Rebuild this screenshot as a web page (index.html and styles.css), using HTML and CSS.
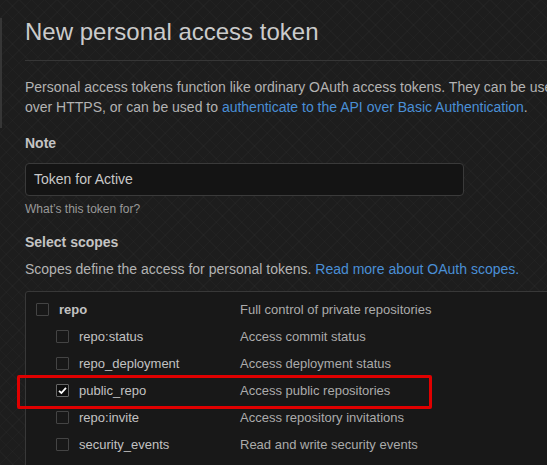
FILE: index.html
```html
<!DOCTYPE html>
<html>
<head>
<meta charset="utf-8">
<link rel="stylesheet" href="styles.css">
</head>
<body>
<div class="page">
  <aside class="side"></aside>
  <main class="main">
    <h1 class="title">New personal access token</h1>
    <p class="intro">Personal access tokens function like ordinary OAuth access tokens. They can be used to access the API<br>over HTTPS, or can be used to <a class="link" href="#">authenticate to the API over Basic Authentication</a>.</p>
    <div class="field">
      <label class="label">Note</label>
      <div class="input">Token for Active</div>
      <div class="hint">What’s this token for?</div>
    </div>
    <div class="label scopes-title">Select scopes</div>
    <p class="scopes-desc">Scopes define the access for personal tokens. <a class="link" href="#">Read more about OAuth scopes.</a></p>
    <div class="scopes">
      <div class="row">
        <div class="name"><span class="cb"></span><span class="strong">repo</span></div>
        <div class="desc">Full control of private repositories</div>
      </div>
      <div class="row sub">
        <div class="name"><span class="cb"></span><span>repo:status</span></div>
        <div class="desc">Access commit status</div>
      </div>
      <div class="row sub">
        <div class="name"><span class="cb"></span><span>repo_deployment</span></div>
        <div class="desc">Access deployment status</div>
      </div>
      <div class="row sub hl">
        <div class="name"><span class="cb checked"><svg viewBox="0 0 13 13" width="13" height="13"><path d="M3 6.8 L5.4 9 L10 3.8" fill="none" stroke="#fff" stroke-width="1.8"/></svg></span><span>public_repo</span></div>
        <div class="desc">Access public repositories</div>
        <div class="redbox"></div>
      </div>
      <div class="row sub">
        <div class="name"><span class="cb"></span><span>repo:invite</span></div>
        <div class="desc">Access repository invitations</div>
      </div>
      <div class="row sub">
        <div class="name"><span class="cb"></span><span>security_events</span></div>
        <div class="desc">Read and write security events</div>
      </div>
    </div>
  </main>
</div>
</body>
</html>
```

FILE: styles.css
```css
html, body {
  margin: 0;
  padding: 0;
  overflow: hidden;
}
body {
  width: 547px;
  height: 465px;
  background-color: #1d1d1d;
  background-image:
    repeating-linear-gradient(45deg, rgba(255,255,255,0.018) 0 1px, transparent 1px 9px),
    repeating-linear-gradient(-45deg, rgba(255,255,255,0.018) 0 1px, transparent 1px 9px);
  font-family: "Liberation Sans", Arial, sans-serif;
  color: #b3b3b3;
  font-size: 14px;
}
.page {
  display: flex;
  align-items: flex-start;
}
.side {
  flex: none;
  width: 2px;
  height: 110px;
  margin-top: 18px;
  background: #363636;
}
.main {
  flex: none;
  width: 720px;
  padding-left: 23px;
}
.title {
  margin: 16px 0 0;
  font-size: 24px;
  font-weight: normal;
  line-height: 32px;
  color: #cbcbcb;
  padding-bottom: 12px;
  border-bottom: 1px solid #363636;
}
.intro {
  margin: 16px 0 0;
  line-height: 20px;
}
.link {
  color: #4a8fd6;
  text-decoration: none;
}
.field {
  margin-top: 16px;
}
.label {
  display: block;
  font-weight: bold;
  color: #c4c4c4;
  line-height: 20px;
}
.input {
  margin-top: 10px;
  box-sizing: border-box;
  width: 439px;
  height: 33px;
  border: 1px solid #3a3a3a;
  border-radius: 4px;
  background: #141414;
  color: #c8c8c8;
  padding: 0 8px;
  line-height: 31px;
  font-size: 14px;
}
.hint {
  margin-top: 5px;
  font-size: 12px;
  color: #999;
  line-height: 16px;
}
.scopes-title {
  margin-top: 15px;
}
.scopes-desc {
  margin: 7px 0 0;
  line-height: 20px;
}
.scopes {
  margin-top: 12px;
  border: 1px solid #383838;
  border-radius: 3px;
  background: #181818;
  padding: 4px 10px 4px 10px;
  height: 170px;
  font-size: 13px;
}
.row {
  position: relative;
  display: grid;
  grid-template-columns: 204px 1fr;
  height: 27px;
  align-items: center;
}
.name {
  display: flex;
  align-items: center;
  gap: 10px;
}
.sub .name {
  padding-left: 20px;
}
.cb {
  flex: none;
  width: 13px;
  height: 13px;
  box-sizing: border-box;
  border: 1px solid #444;
  border-radius: 1px;
  position: relative;
}
.cb.checked {
  background: #0d0d0d;
  border-color: #666;
}
.cb svg {
  position: absolute;
  left: -1px;
  top: -1px;
}
.strong {
  font-weight: bold;
  color: #cfcfcf;
}
.name span:last-child {
  color: #c2c2c2;
}
.desc {
  color: #ababab;
}
.redbox {
  position: absolute;
  left: -19px;
  top: -2px;
  width: 415px;
  height: 34px;
  box-sizing: border-box;
  border: 3px solid #e00000;
  border-radius: 2px;
}
```
